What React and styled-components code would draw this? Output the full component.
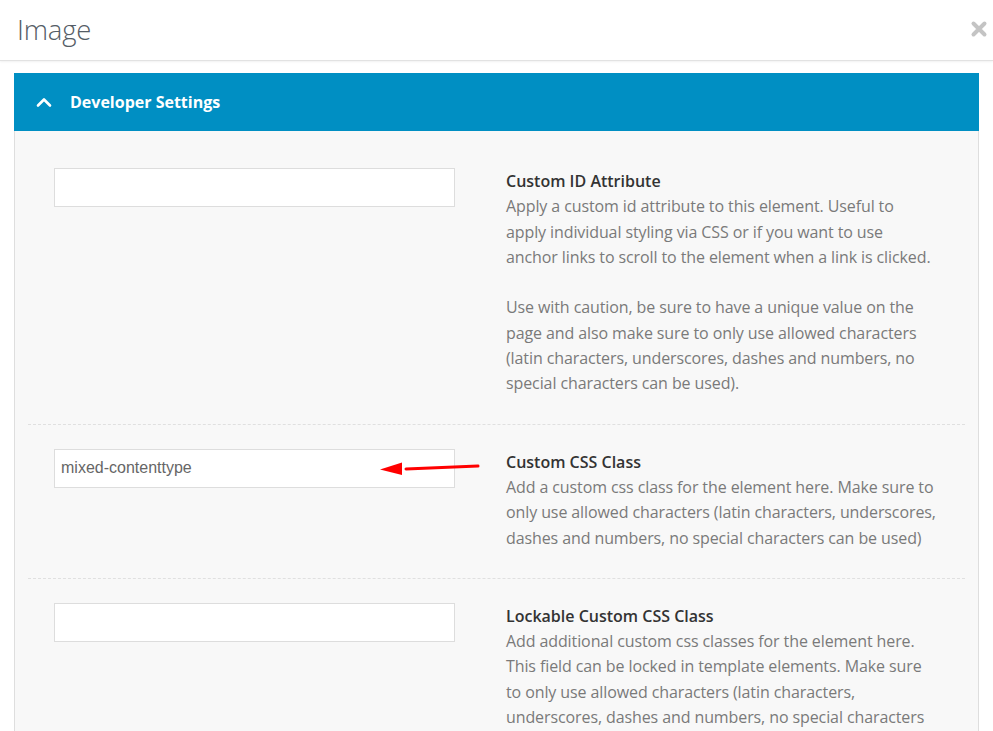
import React from "react";
import styled, { createGlobalStyle } from "styled-components";

const Global = createGlobalStyle`
  html, body { margin: 0; padding: 0; background: #fff; }
  body { font-family: "Open Sans", "Noto Sans", sans-serif; overflow: hidden; }
  * { box-sizing: border-box; }
`;

const Modal = styled.div`
  width: 993px;
  height: 731px;
  background: #fff;
  overflow: hidden;
  position: relative;
`;

const Header = styled.div`
  height: 61px;
  display: flex;
  align-items: center;
  justify-content: space-between;
  padding: 0 5px 0 17px;
  border-bottom: 1px solid #e2e2e2;
  box-shadow: 0 1px 2px rgba(0,0,0,0.06);
`;

const Title = styled.h1`
  margin: 0;
  font-family: "Open Sans", sans-serif;
  font-weight: 300;
  font-size: 27.5px;
  color: #555d66;
  letter-spacing: -0.2px;
  padding-bottom: 1px;
`;

const CloseBtn = styled.button`
  border: 0;
  background: transparent;
  padding: 0;
  width: 18px;
  height: 18px;
  margin-top: -3px;
  display: flex;
  align-items: center;
  justify-content: center;
`;

const Body = styled.div`
  padding: 12px 14px 0 14px;
`;

const Panel = styled.section`
  border: 1px solid #dedede;
  border-top: 0;
  background: #f8f8f8;
`;

const PanelHead = styled.div`
  height: 58px;
  margin: 0 -1px;
  background: #008fc3;
  display: flex;
  align-items: center;
  padding-left: 22px;
  gap: 18px;
  color: #fff;
  font-weight: 700;
  font-size: 16px;
`;

const PanelBody = styled.div`
  padding: 12px 13px 0 13px;
`;

const Row = styled.div`
  display: grid;
  grid-template-columns: 401px 455px;
  column-gap: 51px;
  padding: 25px 0 27px 26px;
  border-bottom: ${p => (p.$last ? "0" : "1px dashed #e0e0e0")};
  position: relative;
  & + & { padding-top: 24px; }
`;

const Input = styled.input`
  width: 401px;
  height: 39px;
  border: 1px solid #dddddd;
  background: #fff;
  padding: 0 6px;
  font-family: "Liberation Sans", Arial, sans-serif;
  font-size: 16px;
  color: #666;
  outline: none;
`;

const Desc = styled.div`
  font-size: 16px;
  line-height: 25.3px;
  color: #7a7a7a;
  letter-spacing: -0.1px;
  margin-top: 1px;
`;

const Label = styled.div`
  font-weight: 600;
  color: #333;
  letter-spacing: 0;
`;

const Para = styled.p`
  margin: 0 0 25.3px 0;
  &:last-child { margin-bottom: 0; }
`;

const Arrow = styled.svg`
  position: absolute;
  left: 352px;
  top: 34px;
  overflow: visible;
`;

const Chevron = () => (
  <svg width="16" height="12" viewBox="0 0 16 12">
    <polyline points="2,9.5 8,3.5 14,9.5" fill="none" stroke="#fff" strokeWidth="2.6" strokeLinecap="round" strokeLinejoin="round" />
  </svg>
);

const CloseIcon = () => (
  <svg width="18" height="18" viewBox="0 0 18 18">
    <path d="M3.5 3.5 L14.5 14.5 M14.5 3.5 L3.5 14.5" stroke="#c4c4c4" strokeWidth="4" strokeLinecap="round" />
  </svg>
);

const Lines = ({ lines }) => (
  <>
    {lines.map((l, i) => (
      <React.Fragment key={i}>
        {l}
        {i < lines.length - 1 && <br />}
      </React.Fragment>
    ))}
  </>
);

export default function App() {
  return (
    <>
      <Global />
      <Modal>
        <Header>
          <Title>Image</Title>
          <CloseBtn aria-label="Close"><CloseIcon /></CloseBtn>
        </Header>
        <Body>
          <Panel>
            <PanelHead>
              <Chevron />
              <span>Developer Settings</span>
            </PanelHead>
            <PanelBody>
              <Row>
                <Input defaultValue="" />
                <Desc>
                  <Label>Custom ID Attribute</Label>
                  <Para>
                    <Lines lines={[
                      "Apply a custom id attribute to this element. Useful to",
                      "apply individual styling via CSS or if you want to use",
                      "anchor links to scroll to the element when a link is clicked.",
                    ]} />
                  </Para>
                  <Para>
                    <Lines lines={[
                      "Use with caution, be sure to have a unique value on the",
                      "page and also make sure to only use allowed characters",
                      "(latin characters, underscores, dashes and numbers, no",
                      "special characters can be used).",
                    ]} />
                  </Para>
                </Desc>
              </Row>
              <Row>
                <Input defaultValue="mixed-contenttype" />
                <Desc>
                  <Label>Custom CSS Class</Label>
                  <Para>
                    <Lines lines={[
                      "Add a custom css class for the element here. Make sure to",
                      "only use allowed characters (latin characters, underscores,",
                      "dashes and numbers, no special characters can be used)",
                    ]} />
                  </Para>
                </Desc>
                <Arrow width="100" height="16" viewBox="0 0 100 16">
                  <path d="M26 10 L98 7" stroke="#f00" strokeWidth="3" strokeLinecap="round" />
                  <polygon points="0,10.5 22,3.5 22,16" fill="#f00" />
                </Arrow>
              </Row>
              <Row $last>
                <Input defaultValue="" />
                <Desc>
                  <Label>Lockable Custom CSS Class</Label>
                  <Para>
                    <Lines lines={[
                      "Add additional custom css classes for the element here.",
                      "This field can be locked in template elements. Make sure",
                      "to only use allowed characters (latin characters,",
                      "underscores, dashes and numbers, no special characters",
                      "can be used)",
                    ]} />
                  </Para>
                </Desc>
              </Row>
            </PanelBody>
          </Panel>
        </Body>
      </Modal>
    </>
  );
}
